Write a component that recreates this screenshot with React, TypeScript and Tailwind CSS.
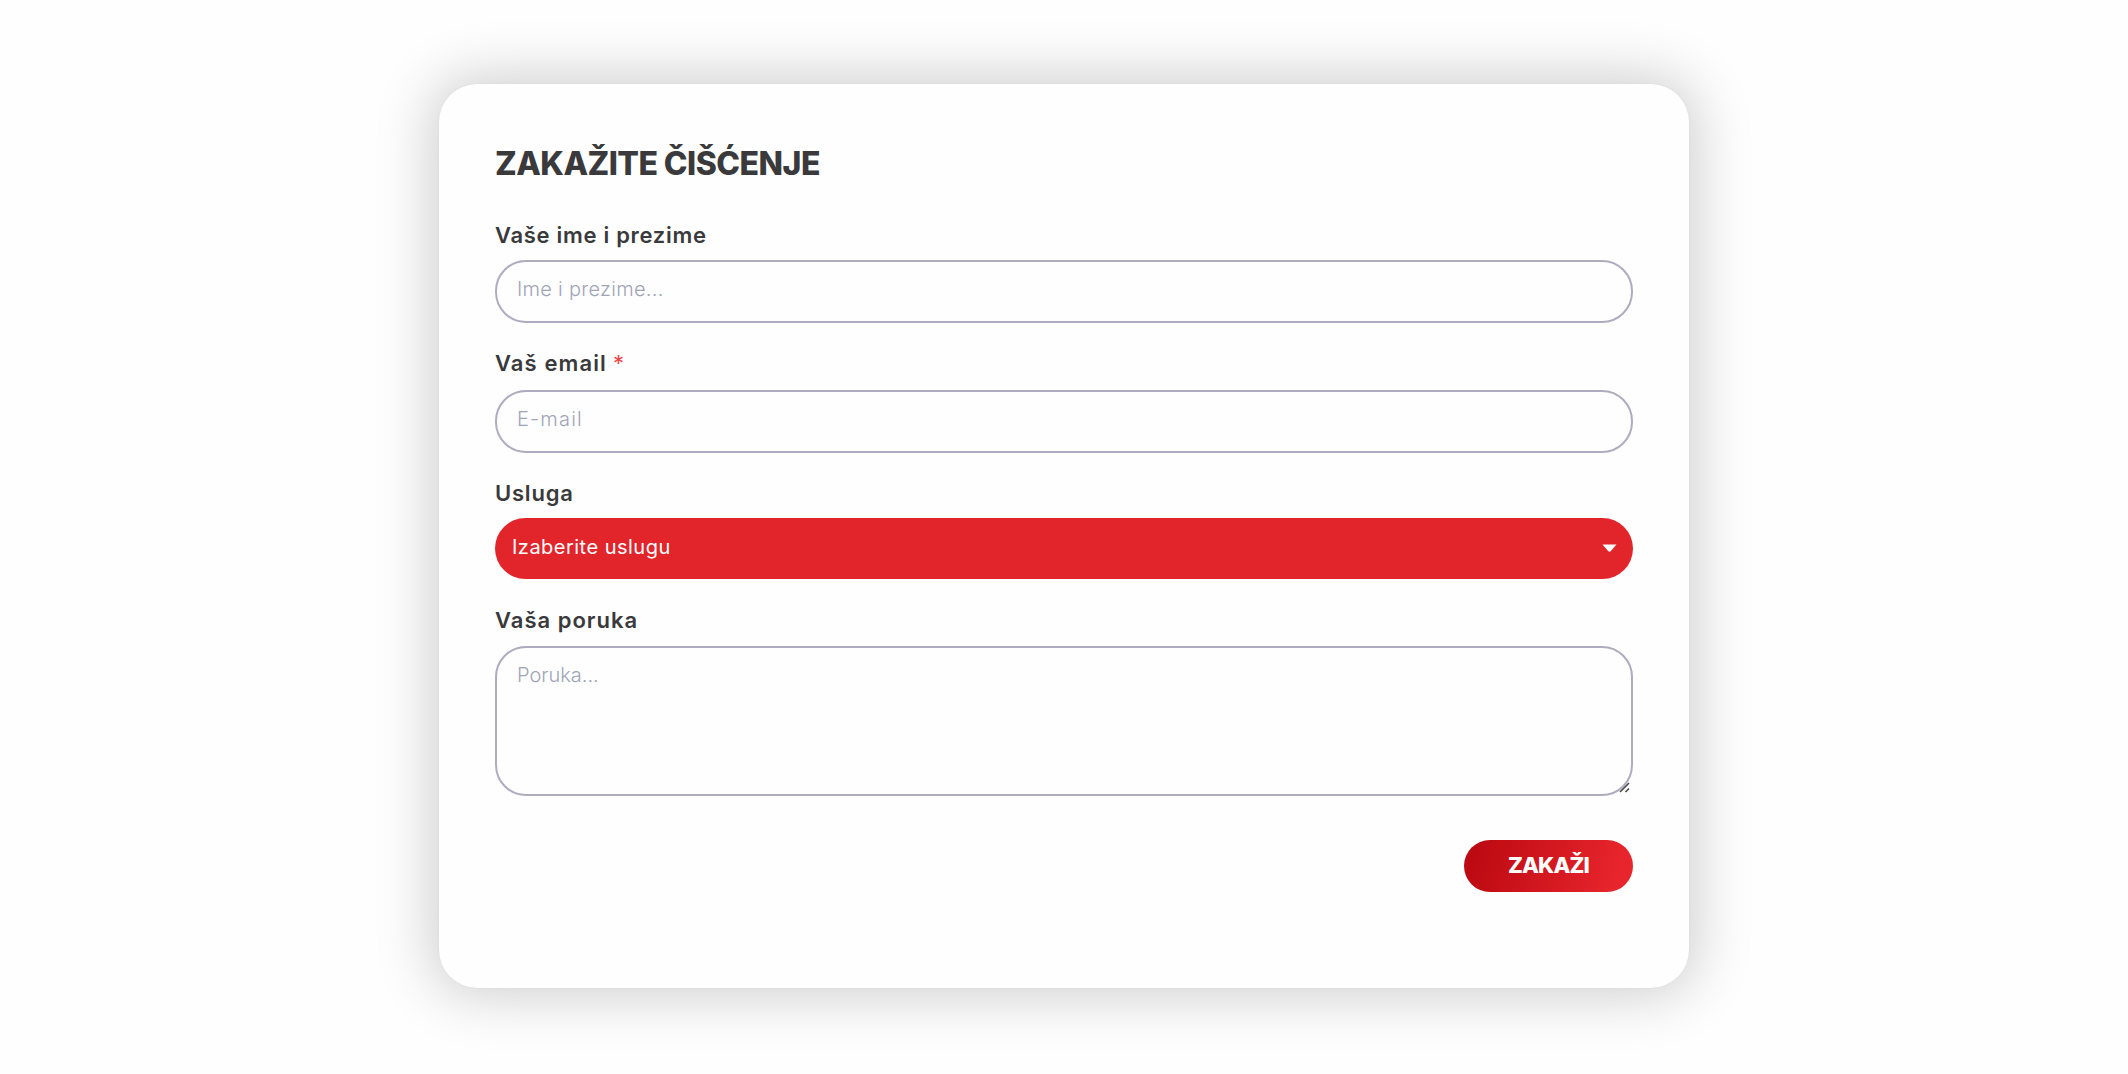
import type { ReactNode } from 'react';

function Label({ children, className }: { children: ReactNode; className: string }) {
  return (
    <label className={`flex h-[30px] items-center whitespace-pre text-[22px] leading-[30px] font-semibold text-[#3a3a3c] ${className}`}>
      <span>{children}</span>
    </label>
  );
}

const field =
  'block w-full rounded-[31px] border-2 border-[#aeacc0] bg-transparent px-[20px] text-[20px] font-light text-[#333335] outline-none placeholder:text-[#a0a4b8] placeholder:opacity-100';

export default function App() {
  return (
    <main className="flex h-[1074px] w-full justify-center overflow-hidden bg-[#fefefe] pt-[84px] font-['Inter','Liberation_Sans',sans-serif]">
      <form className="flex h-[904px] w-[1250px] flex-col rounded-[38px] bg-[#fefefe] px-[56px] pt-[57px] shadow-[0_0_56px_8px_rgba(0,0,0,0.19),0_0_2px_rgba(0,0,0,0.06)]">
        <h1 className="h-[46px] whitespace-nowrap text-[32px] leading-[46px] font-extrabold tracking-[-0.53px] text-[#3a3a3c]">
          <span>ZAKAŽITE ČIŠĆENJE</span>
        </h1>

        <Label className="mt-[33px] tracking-[0.7px]">Vaše ime i prezime</Label>
        <input className={`mt-[10px] h-[63px] pb-[6px] tracking-[0.3px] ${field}`} placeholder="Ime i prezime..." />

        <Label className="mt-[25px] mb-px tracking-[1.1px]">
          Vaš email<span className="ml-[6px] font-normal text-[#f0454b]">*</span>
        </Label>
        <input className={`mt-[11px] h-[63px] pb-[6px] tracking-[1.2px] ${field}`} placeholder="E-mail" />

        <Label className="mt-[25px] mb-px tracking-[0.8px]">Usluga</Label>
        <button type="button" className="mt-[9px] flex h-[61px] w-full items-center justify-between rounded-[31px] bg-[#e2242b] pr-[16px] pb-[4px] pl-[17px] text-[20px] text-white">
          <span className="tracking-[0.48px]">Izaberite uslugu</span>
          <svg className="mt-[3px] h-2 w-[15px]" viewBox="0 0 14 8" fill="white">
            <path d="M0 0.5h14L8.4 7Q7 8.4 5.6 7Z" />
          </svg>
        </button>

        <Label className="mt-[26px] tracking-[1px]">Vaša poruka</Label>
        <div className="relative mt-[11px] h-[150px]">
          <textarea className={`h-[150px] resize-none pt-[12px] leading-[30px] tracking-[0px] ${field}`} placeholder="Poruka..." />
          <svg className="absolute right-[3px] bottom-[3px] h-[11px] w-[11px]" viewBox="0 0 11 11" fill="none" stroke="#4a4a4a" strokeWidth="1.6">
            <path d="M1 10L10 1M6.5 10L10 6.5" />
          </svg>
        </div>

        <button type="button" className="mt-[44px] flex h-[52px] w-[169px] items-center justify-center self-end rounded-full bg-[linear-gradient(105deg,#bd0a12_8%,#e8252d_90%)] pb-[2px] text-[22px] font-extrabold text-white">
          <span className="tracking-[-0.9px]">ZAKAŽI</span>
        </button>
      </form>
    </main>
  );
}
